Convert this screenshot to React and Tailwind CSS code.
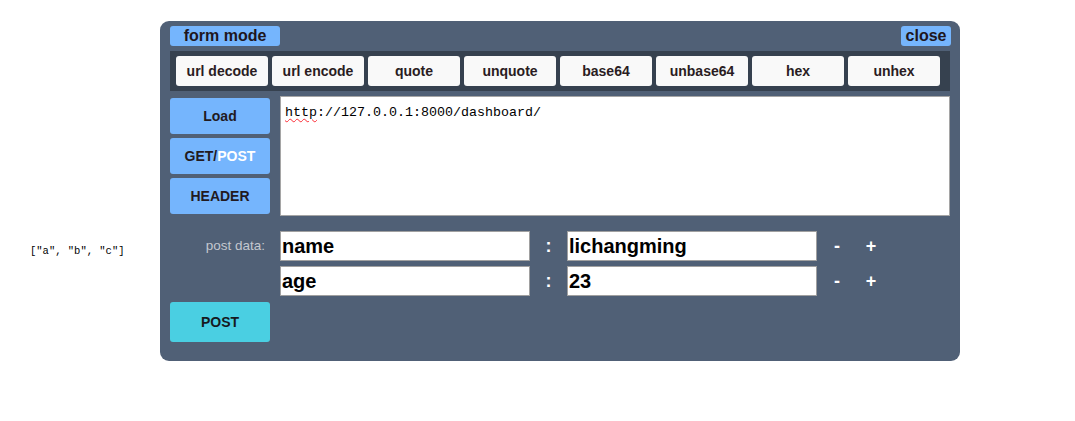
const tools = ["url decode", "url encode", "quote", "unquote", "base64", "unbase64", "hex", "unhex"];

const rows = [
  { key: "name", value: "lichangming" },
  { key: "age", value: "23" },
];

const sans = { fontFamily: "'Liberation Sans', Arial, sans-serif" };

const SideButton = ({ children, className = "" }) => (
  <button
    className={`w-[100px] h-[36px] rounded-[3px] bg-[#75b5fd] text-[14px] font-bold text-[#221a1f] ${className}`}
  >
    {children}
  </button>
);

export default function App() {
  return (
    <div className="w-[1075px] h-[421px] bg-white relative" style={sans}>
      <div className="flex items-start pt-[21px]">
        <div className="w-[160px] h-full flex justify-start">
          <span
            className="mt-[223px] ml-[30px] text-[10.5px] text-black whitespace-pre"
            style={{ fontFamily: "'Liberation Mono', monospace" }}
          >
            ["a", "b", "c"]
          </span>
        </div>

        <div className="w-[800px] h-[340px] bg-[#506076] rounded-[9px] px-[10px] pt-[5px] flex flex-col">
          <div className="flex justify-between h-[20px]">
            <button className="w-[110px] h-[20px] rounded-[3px] bg-[#75b5fd] text-[16px] leading-[20px] font-bold text-[#1e1620]">
              form mode
            </button>
            <button className="w-[50px] h-[20px] mr-[-1px] rounded-[3px] bg-[#75b5fd] text-[16px] leading-[20px] font-bold text-[#1e1620]">
              close
            </button>
          </div>

          <div className="mt-[5px] h-[40px] bg-[#36414f] flex items-center gap-[4px] pl-[6px]">
            {tools.map((t) => (
              <button
                key={t}
                className="w-[92px] h-[30px] rounded-[3px] bg-[#f9f9f9] text-[14px] font-bold text-[#2a1c22]"
              >
                {t}
              </button>
            ))}
          </div>

          <div className="mt-[5px] flex gap-[10px]">
            <div className="flex flex-col gap-[4px] pt-[2px]">
              <SideButton>Load</SideButton>
              <SideButton>
                GET/<span className="text-white">POST</span>
              </SideButton>
              <SideButton>HEADER</SideButton>
            </div>
            <div
              className="w-[670px] h-[120px] bg-white border border-[#a5a5a5] px-[4px] pt-[6px] text-[13.33px] text-black"
              style={{ fontFamily: "'Liberation Mono', monospace" }}
            >
              <span className="underline decoration-wavy decoration-red-500 decoration-1 underline-offset-2">http</span>
              ://127.0.0.1:8000/dashboard/
            </div>
          </div>

          <div className="mt-[15px] flex flex-col gap-[5px]">
            {rows.map((r, i) => (
              <div key={r.key} className="flex items-center">
                <div className="w-[100px] pr-[5px] text-right text-[13.5px] text-[#c3c7cf]">
                  {i === 0 ? "post data:" : ""}
                </div>
                <input
                  defaultValue={r.key}
                  className="ml-[10px] w-[250px] h-[30px] bg-white border border-[#a0a0a0] px-[1px] text-[20px] font-bold text-black outline-none"
                />
                <span className="w-[37px] text-center text-[18px] font-bold text-white">:</span>
                <input
                  defaultValue={r.value}
                  className="w-[250px] h-[30px] bg-white border border-[#a0a0a0] px-[1px] text-[20px] font-bold text-black outline-none"
                />
                <span className="ml-[15px] w-[10px] text-center text-[18px] font-bold text-white">-</span>
                <span className="ml-[22px] w-[14px] text-center text-[18px] font-bold text-white">+</span>
              </div>
            ))}
          </div>

          <button className="mt-[6px] w-[100px] h-[40px] rounded-[3px] bg-[#4acfe2] text-[14px] font-bold text-[#161a1e]">
            POST
          </button>
        </div>
      </div>
    </div>
  );
}
